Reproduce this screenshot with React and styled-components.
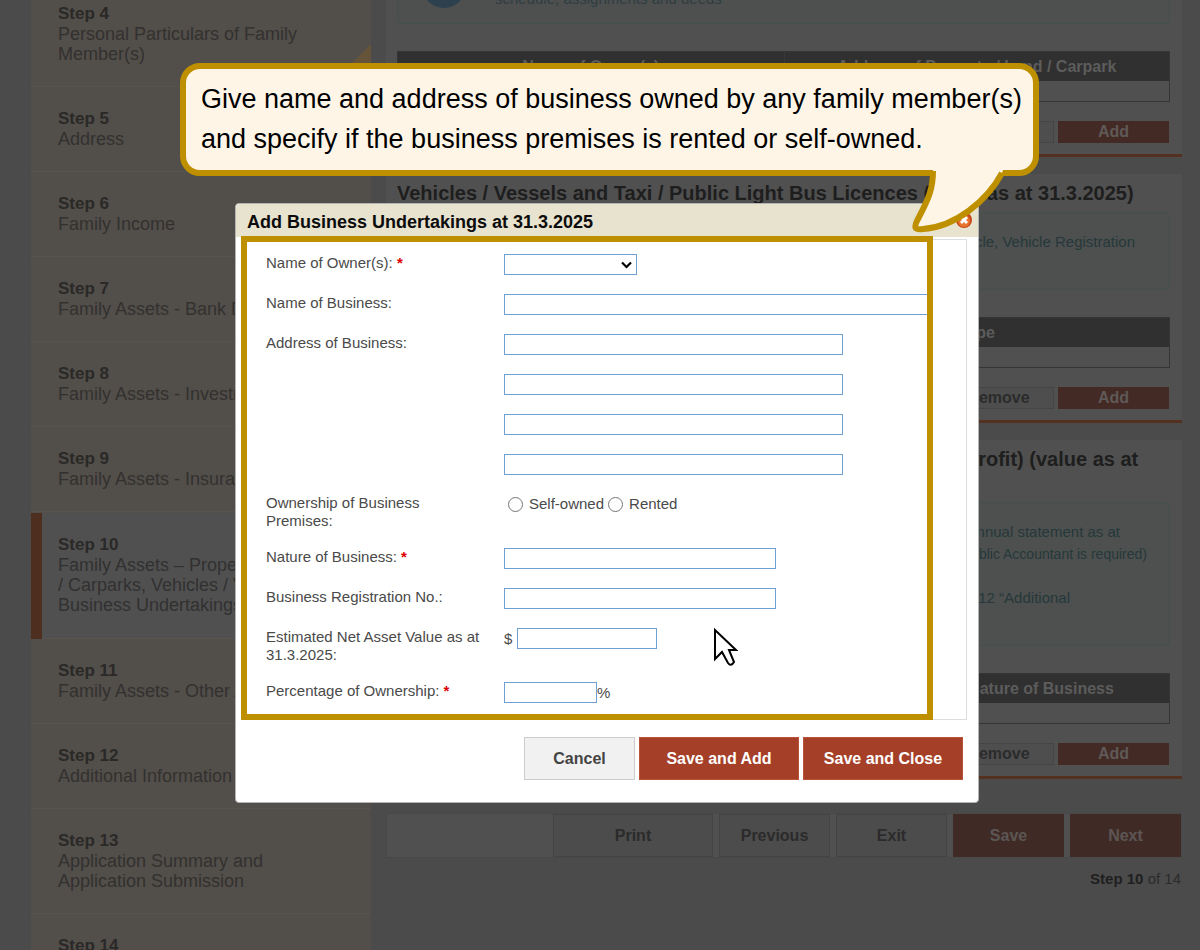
import styled, { createGlobalStyle } from "styled-components";

const steps = [
  { no: 4, lines: ["Personal Particulars of Family", "Member(s)"], corner: true },
  { no: 5, lines: ["Address"] },
  { no: 6, lines: ["Family Income"] },
  { no: 7, lines: ["Family Assets - Bank Deposits"] },
  { no: 8, lines: ["Family Assets - Investments"] },
  { no: 9, lines: ["Family Assets - Insurance"] },
  {
    no: 10,
    lines: ["Family Assets – Properties / Land", "/ Carparks, Vehicles / Vessels,", "Business Undertakings"],
    active: true,
  },
  { no: 11, lines: ["Family Assets - Other Assets"] },
  { no: 12, lines: ["Additional Information"] },
  { no: 13, lines: ["Application Summary and", "Application Submission"] },
  { no: 14, lines: ["Declaration"] },
];

function AssetSection({ title, note, columns }) {
  return (
    <Section>
      {title && <SectionTitle>{title}</SectionTitle>}
      {note}
      <DataTable>
        <thead>
          <tr>
            {columns.map((column) => (
              <th key={column}>{column}</th>
            ))}
          </tr>
        </thead>
        <tbody>
          <tr>
            <td colSpan={columns.length} />
          </tr>
        </tbody>
      </DataTable>
      <SectionActions>
        <SmallButton type="button">Remove</SmallButton>
        <SmallButton type="button" $primary>
          Add
        </SmallButton>
      </SectionActions>
    </Section>
  );
}

function BusinessDialog() {
  return (
    <Dialog role="dialog" aria-labelledby="dialog-title">
      <DialogHeader>
        <DialogTitle id="dialog-title">Add Business Undertakings at 31.3.2025</DialogTitle>
        <CloseButton type="button" aria-label="Close">
          <svg width="16" height="16" viewBox="0 0 16 16">
            <circle cx="8" cy="8" r="8" fill="#c9471b" />
            <circle cx="8" cy="9" r="6" fill="#e8762f" />
            <path d="M5 5l6 6M11 5l-6 6" stroke="#fff" strokeWidth="3" />
          </svg>
        </CloseButton>
      </DialogHeader>

      <Panel>
        <Row>
          <Label htmlFor="owner">
            Name of Owner(s): <Required>*</Required>
          </Label>
          <SelectBox>
            <Select id="owner" />
            <svg width="11" height="8" viewBox="0 0 11 8">
              <path d="M1 1.5l4.5 4.5L10 1.5" fill="none" stroke="#000" strokeWidth="2.2" />
            </svg>
          </SelectBox>
        </Row>
        <Row>
          <Label htmlFor="business">Name of Business:</Label>
          <Input id="business" $width={427} />
        </Row>
        <Row>
          <Label htmlFor="address-1">Address of Business:</Label>
          <AddressLines>
            <Input id="address-1" $width={339} />
            <Input aria-label="Address line 2" $width={339} />
            <Input aria-label="Address line 3" $width={339} />
            <Input aria-label="Address line 4" $width={339} />
          </AddressLines>
        </Row>
        <Row>
          <Label as="span" id="ownership">
            Ownership of Business Premises:
          </Label>
          <RadioGroup role="radiogroup" aria-labelledby="ownership">
            <RadioLabel>
              <Radio type="radio" name="premises" />
              Self-owned
            </RadioLabel>
            <RadioLabel>
              <Radio type="radio" name="premises" />
              Rented
            </RadioLabel>
          </RadioGroup>
        </Row>
        <Row>
          <Label htmlFor="nature">
            Nature of Business: <Required>*</Required>
          </Label>
          <Input id="nature" $width={272} />
        </Row>
        <Row>
          <Label htmlFor="registration">Business Registration No.:</Label>
          <Input id="registration" $width={272} />
        </Row>
        <Row>
          <Label htmlFor="value">Estimated Net Asset Value as at 31.3.2025:</Label>
          <Affixed>
            <Prefix>$</Prefix>
            <Input id="value" $width={140} />
          </Affixed>
        </Row>
        <Row>
          <Label htmlFor="percentage">
            Percentage of Ownership: <Required>*</Required>
          </Label>
          <Affixed>
            <Input id="percentage" $width={93} />%
          </Affixed>
        </Row>
        <Highlight />
      </Panel>

      <DialogActions>
        <DialogButton type="button">Cancel</DialogButton>
        <DialogButton type="button" $primary>
          Save and Add
        </DialogButton>
        <DialogButton type="button" $primary>
          Save and Close
        </DialogButton>
      </DialogActions>
    </Dialog>
  );
}

function App() {
  return (
    <>
      <GlobalStyle />
      <Page>
        <Sidebar>
          <StepList>
            {steps.map((step) => (
              <Step key={step.no} $active={step.active} $corner={step.corner}>
                <b>Step {step.no}</b>
                {step.lines.map((line) => (
                  <span key={line}>{line}</span>
                ))}
              </Step>
            ))}
          </StepList>
        </Sidebar>

        <Content>
          <AssetSection
            note={
              <Note>
                <NoteIcon />
                <NoteText>schedule, assignments and deeds</NoteText>
              </Note>
            }
            columns={["Name of Owner(s)", "Address of Property / Land / Carpark"]}
          />
          <AssetSection
            title="Vehicles / Vessels and Taxi / Public Light Bus Licences (value as at 31.3.2025)"
            note={
              <Note>
                <NoteLine $end={34}>Vehicle, Vehicle Registration</NoteLine>
              </Note>
            }
            columns={["Name of Owner(s)", "Type"]}
          />
          <AssetSection
            title={
              <>
                Business Undertakings (including partnership and share of profit) (value as at
                <br />
                31.3.2025)
              </>
            }
            note={
              <Note $tall>
                <NoteLine $end={49}>Annual statement as at</NoteLine>
                <NoteLine $end={22} $small>
                  (Certified Public Accountant is required)
                </NoteLine>
                <NoteLine $end={22}>&nbsp;</NoteLine>
                <NoteLine $end={99}>Step 12 “Additional</NoteLine>
              </Note>
            }
            columns={["Name of Owner(s)", "Name of Business", "Nature of Business"]}
          />

          <Toolbar>
            <ToolButton type="button" $wide>
              Print
            </ToolButton>
            <ToolButton type="button">Previous</ToolButton>
            <ToolButton type="button">Exit</ToolButton>
            <ToolButton type="button" $primary>
              Save
            </ToolButton>
            <ToolButton type="button" $primary>
              Next
            </ToolButton>
          </Toolbar>
          <Progress>
            <b>Step 10</b> of 14
          </Progress>
        </Content>
      </Page>

      <Overlay>
        <Stage>
          <BusinessDialog />
          <Callout>
            Give name and address of business owned by any family member(s)
            <br />
            and specify if the business premises is rented or self-owned.
            <Tail width="100" height="66" viewBox="0 0 100 66">
              <path
                d="M24 0C24 18 20 28 10 47C4 58 5 60 14 59C46 57 78 31 93 3L94 0Z"
                fill="#fef5e7"
              />
              <path
                d="M24 1C24 18 20 28 10 47C4 58 5 60 14 59C46 57 78 31 93 3"
                fill="none"
                stroke="#be9000"
                strokeWidth="6"
              />
            </Tail>
          </Callout>
          <Cursor width="24" height="40" viewBox="0 0 24 40">
            <path
              d="M1 2V31L8 24L14 35Q17 39 20 34L15 22H22Z"
              fill="#fff"
              stroke="#000"
              strokeWidth="2"
            />
          </Cursor>
        </Stage>
      </Overlay>
    </>
  );
}

const GlobalStyle = createGlobalStyle`
  * {
    box-sizing: border-box;
  }

  body {
    margin: 0;
    background: #4b4b4b;
    font-family: "Liberation Sans", Arial, sans-serif;
  }

  button,
  input,
  select {
    font-family: inherit;
  }
`;

const Page = styled.div`
  display: flex;
  align-items: flex-start;
  gap: 15px;
  height: 100vh;
  padding: 0 18px 0 31px;
  overflow: hidden;
`;

const Sidebar = styled.nav`
  flex: 0 0 340px;
  background: #524e49;
`;

/* the page behind the dialog is scrolled part of the way down */
const StepList = styled.ul`
  margin: -18px 0 0;
  padding: 0;
  list-style: none;
`;

const Step = styled.li`
  position: relative;
  display: flex;
  flex-direction: column;
  margin-top: ${({ $active }) => ($active ? 1 : 0)}px;
  padding: 22px 0 ${({ $active }) => ($active ? "24px 16px" : "23px 27px")};
  border-left: ${({ $active }) => ($active ? "11px solid #4e2f1f" : "none")};
  background: ${({ $active }) => ($active ? "#505050" : "#524e49")};
  box-shadow: inset 0 -1px #57534e;
  color: #323130;
  font-size: 18px;
  line-height: 20px;
  white-space: nowrap;

  b {
    color: #2a2928;
    font-size: 17px;
  }

  &::after {
    content: "";
    display: ${({ $corner }) => ($corner ? "block" : "none")};
    position: absolute;
    right: 0;
    bottom: 0;
    width: 43px;
    height: 43px;
    background: #66543a;
    clip-path: polygon(100% 0, 100% 100%, 0 100%);
  }
`;

const Content = styled.main`
  flex: 1;
  min-width: 0;
  margin-top: -61px;
`;

const Section = styled.section`
  margin-bottom: 17px;
  padding: 7px 12px 11px 11px;
  border-bottom: 3px solid #53301f;
  background: #505050;
`;

const SectionTitle = styled.h2`
  margin: 0 0 7px;
  color: #1e1e1e;
  font-size: 20px;
  line-height: 24px;
  white-space: nowrap;
`;

const Note = styled.div`
  position: relative;
  height: ${({ $tall }) => ($tall ? 144 : 78)}px;
  padding-top: 18px;
  border: 1px solid #43504f;
  border-radius: 5px;
  background: #4d504e;
`;

const NoteIcon = styled.span`
  position: absolute;
  top: 17px;
  left: 24px;
  width: 44px;
  height: 44px;
  border-radius: 50%;
  background: #2c414d;
`;

const NoteText = styled.p`
  margin: 23px 0 0 97px;
  color: #303d42;
  font-size: 15px;
  line-height: 22px;
`;

const NoteLine = styled.p`
  margin: 0;
  padding-right: ${({ $end }) => $end}px;
  color: #26383b;
  font-size: ${({ $small }) => ($small ? 14 : 15)}px;
  line-height: 22px;
  text-align: right;
`;

const DataTable = styled.table`
  width: 100%;
  margin-top: 27px;
  border: 1px solid #353535;
  border-spacing: 0;
  table-layout: fixed;

  th {
    height: 29px;
    padding: 0;
    background: #303030;
    color: #5c5c5c;
    font-size: 16px;
    line-height: 20px;
  }

  th + th {
    border-left: 1px solid #383838;
  }

  td {
    height: 20px;
    padding: 0;
    background: #505050;
  }
`;

const SectionActions = styled.div`
  display: flex;
  justify-content: flex-end;
  gap: 4px;
  margin-top: 19px;
  padding-right: 1px;
`;

const SmallButton = styled.button`
  width: 111px;
  height: 22px;
  padding: 0;
  border: ${({ $primary }) => ($primary ? "none" : "1px solid #454545")};
  background: ${({ $primary }) => ($primary ? "#432a25" : "#4e4e4e")};
  color: ${({ $primary }) => ($primary ? "#5f5957" : "#2b2b2b")};
  font-size: 16px;
  font-weight: bold;
  line-height: 20px;
`;

const Toolbar = styled.div`
  display: flex;
  justify-content: flex-end;
  gap: 6px;
  margin-top: 34px;
  border: 1px solid #484848;
  background: #505050;
`;

const ToolButton = styled.button`
  width: ${({ $wide }) => ($wide ? 160 : 111)}px;
  height: 43px;
  padding: 0;
  border: ${({ $primary }) => ($primary ? "none" : "1px solid #444")};
  background: ${({ $primary }) => ($primary ? "#402a26" : "#4c4c4c")};
  color: ${({ $primary }) => ($primary ? "#5c5654" : "#2b2b2b")};
  font-size: 16px;
  font-weight: bold;
`;

const Progress = styled.p`
  margin: 10px 1px 0;
  color: #2c2c2c;
  font-size: 15px;
  line-height: 22px;
  text-align: right;

  b {
    color: #1f1f1f;
  }
`;

const Overlay = styled.div`
  position: fixed;
  inset: 0;
  display: flex;
  align-items: flex-start;
  justify-content: center;
  padding: 203px 0 0 14px;
`;

const Stage = styled.div`
  position: relative;
  flex: 0 0 744px;
`;

const Dialog = styled.div`
  border: 1px solid #b4b4b4;
  border-radius: 4px;
  background: #fff;
`;

const DialogHeader = styled.header`
  display: flex;
  align-items: flex-start;
  justify-content: space-between;
  height: 33px;
  padding: 8px 6px 0 11px;
  border-radius: 4px 4px 0 0;
  background: #e8e3ce;
`;

const DialogTitle = styled.h1`
  margin: 0;
  color: #0c0c0c;
  font-size: 18px;
  line-height: 20px;
`;

const CloseButton = styled.button`
  display: flex;
  padding: 0;
  border: none;
  background: none;
`;

const Panel = styled.form`
  position: relative;
  display: flex;
  flex-direction: column;
  gap: 18px;
  margin: 2px 11px 0 6px;
  padding: 14px 0 15px 23px;
  border: 1px solid #ddd;
  color: #4a4a4a;
  font-size: 15px;
  line-height: 18px;
`;

/* gold frame laid over the panel to point out the fields */
const Highlight = styled.div`
  position: absolute;
  top: -4px;
  left: -2px;
  width: 692px;
  bottom: -1px;
  border: 6px solid #be9000;
  pointer-events: none;
`;

const Row = styled.div`
  display: grid;
  grid-template-columns: 238px 1fr;
  align-items: start;
  min-height: 22px;
`;

const Label = styled.label`
  padding-right: 18px;
`;

const Required = styled.span`
  color: #d00;
  font-weight: bold;
`;

const Input = styled.input`
  width: ${({ $width }) => $width}px;
  height: 21px;
  padding: 0 4px;
  border: 1px solid #6f9fd3;
  background: #fff;
`;

const SelectBox = styled.div`
  position: relative;
  width: 133px;
  height: 21px;

  svg {
    position: absolute;
    top: 7px;
    right: 5px;
    pointer-events: none;
  }
`;

const Select = styled.select`
  display: block;
  width: 100%;
  height: 100%;
  border: 1px solid #6f9fd3;
  border-radius: 0;
  background: #fff;
  appearance: none;
`;

const AddressLines = styled.div`
  display: grid;
  grid-auto-rows: 22px;
  row-gap: 18px;
`;

const RadioGroup = styled.div`
  display: flex;
  gap: 4px;
  padding-left: 4px;
`;

const RadioLabel = styled.label`
  display: flex;
  align-items: center;
  gap: 6px;
  line-height: 20px;
`;

const Radio = styled.input`
  width: 15px;
  height: 15px;
  margin: 0;
  border: 1px solid #767676;
  border-radius: 50%;
  background: #fff;
  appearance: none;
`;

const Affixed = styled.div`
  display: flex;
  align-items: center;
`;

const Prefix = styled.span`
  width: 13px;
`;

const DialogActions = styled.footer`
  display: flex;
  justify-content: flex-end;
  gap: 4px;
  padding: 17px 15px 22px;
`;

const DialogButton = styled.button`
  width: ${({ $primary }) => ($primary ? 160 : 111)}px;
  height: 43px;
  padding: 0;
  border: 1px solid ${({ $primary }) => ($primary ? "#b9513b" : "#ccc")};
  background: ${({ $primary }) => ($primary ? "#a63f28" : "#f1f1f1")};
  color: ${({ $primary }) => ($primary ? "#fff" : "#444")};
  font-size: 16px;
  font-weight: bold;
`;

const Callout = styled.div`
  position: absolute;
  top: -140px;
  left: -55px;
  width: 859px;
  height: 113px;
  padding: 10px 0 0 15px;
  border: 6px solid #be9000;
  border-radius: 20px;
  background: #fef5e7;
  color: #000;
  font-size: 27px;
  line-height: 40px;
  white-space: nowrap;
`;

const Tail = styled.svg`
  position: absolute;
  top: 101px;
  left: 723px;
`;

const Cursor = styled.svg`
  position: absolute;
  top: 425px;
  left: 479px;
`;

export default App;
